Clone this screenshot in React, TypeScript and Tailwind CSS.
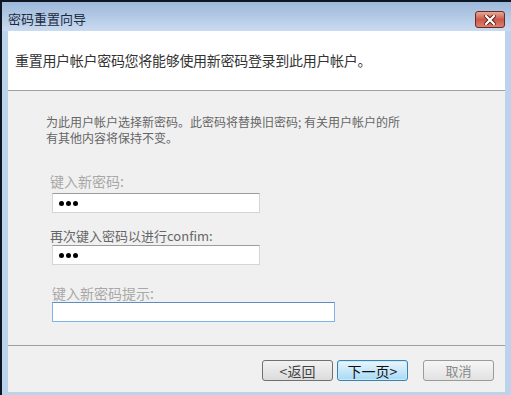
import React from "react";

const cjk = { fontFamily: '"Noto Sans CJK SC", "Noto Sans", sans-serif' };

function Dots() {
  return (
    <div className="flex items-center gap-[2px] pl-[6px]">
      <span className="w-[5px] h-[5px] rounded-full bg-black" />
      <span className="w-[5px] h-[5px] rounded-full bg-black" />
      <span className="w-[5px] h-[5px] rounded-full bg-black" />
    </div>
  );
}

export default function App() {
  return (
    <div
      className="w-[511px] h-[395px] flex flex-col bg-[#bcd3ec] border-l-[2px] border-t-[2px] border-[#0e1523] overflow-hidden"
      style={cjk}
    >
      {/* title bar */}
      <div className="h-[29px] shrink-0 flex items-start justify-between bg-gradient-to-b from-[#9db8da] to-[#c9dbf0] pl-[6px] pr-[6px]">
        <div className="mt-[9px] text-[13px] leading-[16px] text-[#1c2b40]">密码重置向导</div>
        <div className="mt-[9px] w-[30px] h-[17px] rounded-[3px] border border-[#6e2a22] bg-gradient-to-b from-[#e8a898] via-[#c8584a] to-[#d9806f] flex items-center justify-center">
          <svg width="12" height="10" viewBox="0 0 12 10">
            <path d="M2 1 L10 9 M10 1 L2 9" stroke="#5a1a12" strokeWidth="4" strokeLinecap="square" />
            <path d="M2 1 L10 9 M10 1 L2 9" stroke="#ffffff" strokeWidth="2.2" strokeLinecap="square" />
          </svg>
        </div>
      </div>

      {/* content */}
      <div className="flex-1 flex flex-col ml-[6px] mr-[6px] mb-[3px] bg-[#f0f0f0]">
        <div className="h-[59px] shrink-0 bg-white flex items-center pl-[7px]">
          <span className="text-[14px] tracking-[-0.3px] text-[#333]">重置用户帐户密码您将能够使用新密码登录到此用户帐户。</span>
        </div>
        <div className="h-px bg-[#a0a0a0] shrink-0" />

        <div className="h-[254px] shrink-0 flex flex-col pl-[38px]">
          <p className="mt-[23px] text-[12px] leading-[16px] text-[#666] w-[380px]">
            为此用户帐户选择新密码。此密码将替换旧密码; 有关用户帐户的所<br />有其他内容将保持不变。
          </p>

          <div className="ml-[4px] mt-[25px] text-[14px] leading-[20px] text-[#a8a8a8]">键入新密码:</div>
          <div className="ml-[6px] mt-[2px] w-[208px] h-[20px] bg-white border border-[#d5d5d5] border-t-[#9c9c9c] flex items-center">
            <Dots />
          </div>

          <div className="ml-[4px] mt-[14px] text-[13px] leading-[18px] text-[#666]">再次键入密码以进行confim:</div>
          <div className="ml-[6px] w-[208px] h-[20px] bg-white border border-[#d5d5d5] border-t-[#9c9c9c] flex items-center">
            <Dots />
          </div>

          <div className="ml-[6px] mt-[19px] text-[14px] leading-[18px] text-[#a8a8a8]">键入新密码提示:</div>
          <div className="ml-[6px] w-[283px] h-[20px] bg-white border border-[#7eb4ea] border-t-[#5d8ebf]" />
        </div>

        <div className="h-px bg-[#a0a0a0] shrink-0" />

        <div className="flex-1 flex items-start justify-end pr-[11px] pt-[14px]">
          <button className="w-[71px] h-[21px] rounded-[3px] border border-[#707070] bg-gradient-to-b from-[#f2f2f2] to-[#dcdcdc] text-[14px] leading-none text-[#444] flex items-center justify-center">
            &lt;返回
          </button>
          <button className="ml-[4px] w-[71px] h-[21px] rounded-[3px] border border-[#3c7fb1] bg-gradient-to-b from-[#eaf6fd] to-[#a7d9f5] text-[14px] leading-none text-[#111] flex items-center justify-center shadow-[inset_0_0_0_1px_#c6ecfc]">
            下一页&gt;
          </button>
          <button className="ml-[15px] w-[71px] h-[21px] rounded-[3px] border border-[#9a9a9a] bg-gradient-to-b from-[#f6f6f6] to-[#e2e2e2] text-[13px] leading-none text-[#8a8a8a] flex items-center justify-center">
            取消
          </button>
        </div>
      </div>
    </div>
  );
}
